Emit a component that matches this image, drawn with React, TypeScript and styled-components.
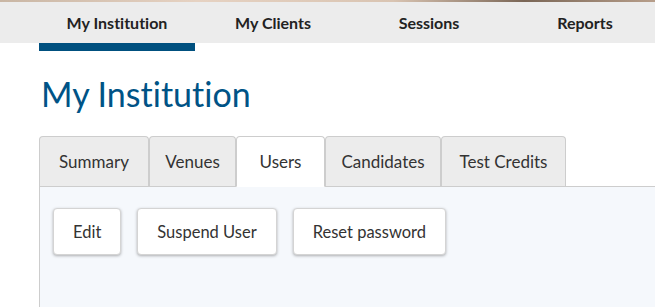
import React from "react";
import styled, { createGlobalStyle } from "styled-components";

const Global = createGlobalStyle`
  html, body { margin: 0; padding: 0; background: #fff; overflow: hidden; }
  body {
    font-family: "Lato", "Open Sans", sans-serif;
    color: #333;
    font-variant-ligatures: none;
    font-feature-settings: "liga" 0, "clig" 0;
  }
`;

const Banner = styled.div`
  height: 2px;
  background: linear-gradient(90deg, #c9b6a4 0%, #e6d2c2 30%, #d9c4b2 60%, #7a6656 80%, #b79e8a 100%);
`;

const NavBar = styled.nav`
  display: flex;
  background: #ececec;
  height: 41px;
  padding-left: 39px;
`;

const NavItem = styled.a<{ $active?: boolean }>`
  flex: 0 0 156px;
  display: flex;
  align-items: center;
  justify-content: center;
  font-size: 16px;
  font-weight: 700;
  color: #222;
  text-decoration: none;
  position: relative;
  ${(p) =>
    p.$active &&
    `&::after {
      content: "";
      position: absolute;
      left: 0;
      right: 0;
      top: 41px;
      height: 8px;
      background: #00507f;
    }`}
`;

const Main = styled.main`
  padding-left: 39px;
`;

const Title = styled.h1`
  margin: 0;
  padding: 31px 0 0 2px;
  height: 93px;
  box-sizing: border-box;
  font-size: 34px;
  line-height: 40px;
  font-weight: 400;
  color: #005386;
`;

const TabList = styled.div`
  display: flex;
  height: 50px;
`;

const Tab = styled.div<{ $active?: boolean; $w: number }>`
  width: ${(p) => p.$w}px;
  box-sizing: border-box;
  display: flex;
  align-items: center;
  justify-content: center;
  font-size: 17px;
  color: #333;
  background: ${(p) => (p.$active ? "#fff" : "#ececec")};
  border: 1px solid #cdcdcd;
  border-bottom: ${(p) => (p.$active ? "1px solid #fff" : "none")};
  border-radius: 4px 4px 0 0;
  position: relative;
  z-index: 1;
  margin-bottom: ${(p) => (p.$active ? "-1px" : "0")};
  height: ${(p) => (p.$active ? "51px" : "50px")};
`;

const Panel = styled.section`
  background: #f5f8fc;
  border-top: 1px solid #cdcdcd;
  border-left: 1px solid #cdcdcd;
  height: 200px;
  padding: 21px 0 0 13px;
  display: flex;
  align-items: flex-start;
  gap: 16px;
`;

const Button = styled.button`
  height: 47px;
  padding: 0 19px;
  background: #fff;
  border: 1px solid #d4d4d4;
  border-radius: 4px;
  box-shadow: 0 1px 3px rgba(0, 0, 0, 0.3);
  font-family: inherit;
  font-size: 16.5px;
  color: #333;
`;

export default function App() {
  const tabs: [string, number, boolean?][] = [
    ["Summary", 110],
    ["Venues", 87],
    ["Users", 89, true],
    ["Candidates", 116],
    ["Test Credits", 125],
  ];
  return (
    <>
      <Global />
      <Banner />
      <NavBar>
        <NavItem $active>My Institution</NavItem>
        <NavItem>My Clients</NavItem>
        <NavItem>Sessions</NavItem>
        <NavItem>Reports</NavItem>
      </NavBar>
      <Main>
        <Title>My Institution</Title>
        <TabList>
          {tabs.map(([label, w, active]) => (
            <Tab key={label} $w={w} $active={active}>
              {label}
            </Tab>
          ))}
        </TabList>
        <Panel>
          <Button>Edit</Button>
          <Button>Suspend User</Button>
          <Button>Reset password</Button>
        </Panel>
      </Main>
    </>
  );
}
